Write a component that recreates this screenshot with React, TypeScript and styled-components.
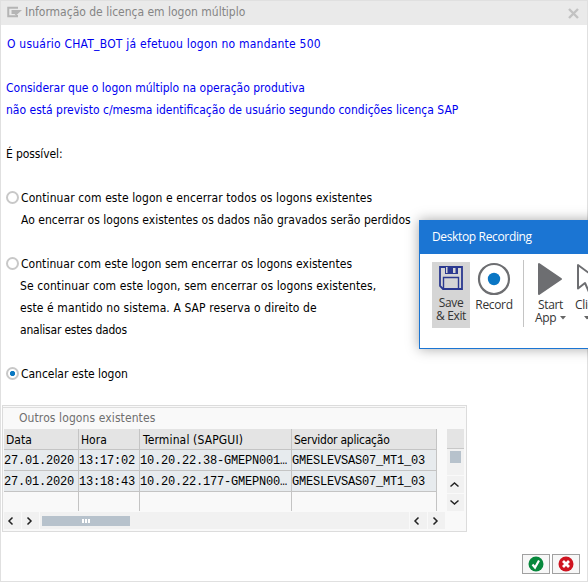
import React from 'react';
import styled, { createGlobalStyle } from 'styled-components';

const Global = createGlobalStyle`
  *, *::before, *::after { box-sizing: border-box; }
  body { margin: 0; background: #fff; overflow: hidden; }
`;

const Screen = styled.div`
  position: relative;
  width: 588px;
  height: 582px;
  overflow: hidden;
`;

const Dialog = styled.div`
  display: flex;
  flex-direction: column;
  height: 100%;
  border: 1px solid #e0e0e0;
  background: #fff;
  color: #000;
  font: 12px/22px 'DejaVu Sans Condensed', 'DejaVu Sans', sans-serif;
  white-space: nowrap;
`;

const TitleBar = styled.header`
  display: flex;
  align-items: center;
  height: 24px;
  flex: none;
  padding: 0 8px 2px 6px;
  background: #eaeaea;
  color: #858585;
`;

const Title = styled.h1`
  flex: 1;
  margin: 0 0 0 3px;
  font: inherit;
  letter-spacing: -0.01px;
`;

const CloseIcon = styled.svg`
  margin-top: 3px;
`;

const Body = styled.main`
  display: flex;
  flex-direction: column;
  padding: 8px 0 0 5px;
`;

const Line = styled.p<{ $tracking?: number; $notice?: boolean; $indent?: number; $gap?: boolean }>`
  height: 22px;
  margin: 0 0 ${p => (p.$gap ? 22 : 0)}px ${p => p.$indent ?? 0}px;
  letter-spacing: ${p => p.$tracking ?? 0}px;
  color: ${p => (p.$notice ? '#0000f0' : '#000')};
`;

const Option = styled.label<{ $tracking?: number; $gap?: boolean }>`
  display: flex;
  align-items: center;
  gap: 2px;
  height: 22px;
  margin-bottom: ${p => (p.$gap ? 22 : 0)}px;
  letter-spacing: ${p => p.$tracking ?? 0}px;
`;

const Radio = styled.span<{ $on?: boolean }>`
  width: 13px;
  height: 13px;
  margin-bottom: 1px;
  border: 2px solid #c8c8c8;
  border-radius: 50%;
  background: ${p => (p.$on ? 'radial-gradient(circle, #0a78c2 2.2px, #fff 3px)' : '#fff')};
`;

const Group = styled.section`
  width: 465px;
  height: 127px;
  flex: none;
  margin: 20px 0 0 1px;
  padding: 1px;
  border: 1px solid #dcdcdc;
  background: #f9f9f9;
`;

const GroupTitle = styled.h2`
  height: 22px;
  margin: 0 0 0 -1px;
  padding: 0 0 0 16px;
  border-top: 1px solid #dedede;
  font: inherit;
  line-height: 20px;
  letter-spacing: 0.1px;
  color: #6f6f6f;
`;

const GridArea = styled.div`
  display: flex;
  height: 82px;
  gap: 10px;
`;

const Table = styled.div`
  display: grid;
  grid-template-columns: 75px 61px 152px 145px;
  grid-template-rows: 21px 21px 21px 19px;
`;

const Cell = styled.div<{ $kind?: 'head' | 'blank'; $tracking?: number }>`
  overflow: hidden;
  border-right: 1px solid #c4c4c4;
  border-bottom: ${p => (p.$kind === 'blank' ? 0 : 1)}px solid #c4c4c4;
  background: ${p => (p.$kind === 'head' ? '#e4e4e4' : p.$kind === 'blank' ? '#f9f9f9' : '#e7ebee')};
  ${p =>
    p.$kind === 'head'
      ? `padding-left: 2px; line-height: 22px; letter-spacing: ${p.$tracking ?? 0}px;`
      : `font: 12px/22px 'Courier New', 'Liberation Mono', monospace; letter-spacing: -0.2px;`}
`;

const HeadInset = styled.span<{ $by: number }>`
  padding-left: ${p => p.$by}px;
`;

const VScroll = styled.div`
  display: flex;
  flex-direction: column;
  width: 17px;
  gap: 1px;
`;

const VHead = styled.div`
  height: 20px;
  margin-bottom: -1px;
  border-bottom: 1px solid #c8c8c8;
  background: #e4e4e4;
`;

const VTrack = styled.div`
  flex: 1;
  padding: 2px 3px;
  background: #f1f1f1;
`;

const VThumb = styled.div`
  height: 12px;
  background: #b7c2cc;
`;

const HScroll = styled.div`
  display: flex;
  gap: 1px;
  height: 17px;
  width: 461px;
  margin-top: 1px;
  padding-right: 20px;
`;

const HTrack = styled.div`
  flex: 1;
  padding: 4px 2px;
  background: #f1f1f1;
`;

const HThumb = styled.div`
  display: flex;
  align-items: center;
  justify-content: center;
  gap: 1px;
  width: 88px;
  height: 10px;
  background: #b7c2cc;
`;

const Grip = styled.i`
  width: 2px;
  height: 4px;
  background: #fff;
`;

const ArrowButton = styled.button`
  display: flex;
  align-items: center;
  justify-content: center;
  flex: none;
  width: 17px;
  height: 17px;
  padding: 0 2px 0 0;
  border: 0;
  background: #f1f1f1;
`;

const Footer = styled.footer`
  display: flex;
  justify-content: flex-end;
  gap: 2px;
  margin-top: auto;
  padding: 0 7px 7px 0;
`;

const FooterButton = styled.button`
  display: grid;
  place-items: center;
  width: 28px;
  height: 20px;
  padding: 0;
  border: 1px solid #a0a0a0;
  background: #f7f7f7;
`;

const Recorder = styled.aside`
  position: absolute;
  left: 419px;
  top: 220px;
  width: 260px;
  height: 129px;
  border: 1px solid #1b75d3;
  background: #fff;
  box-shadow: 0 0 12px rgba(0, 0, 0, 0.35);
  color: #333;
  font: 12px/13px 'Open Sans', sans-serif;
  white-space: nowrap;
`;

const RecorderTitle = styled.div`
  height: 33px;
  padding-left: 12px;
  background: #1b75d3;
  color: #fff;
  line-height: 32px;
  letter-spacing: -0.35px;
`;

const Tools = styled.div`
  display: flex;
  align-items: flex-start;
  padding: 8px 0 0 12px;
`;

const Tool = styled.div<{ $width: number; $active?: boolean; $start?: boolean }>`
  display: flex;
  flex-direction: column;
  align-items: ${p => (p.$start ? 'flex-start' : 'center')};
  flex: none;
  width: ${p => p.$width}px;
  height: 66px;
  background: ${p => (p.$active ? '#d5d5d5' : 'transparent')};
  letter-spacing: -0.35px;
`;

const Label = styled.span<{ $top?: number; $inset?: number }>`
  display: flex;
  align-items: center;
  gap: 4px;
  height: 13px;
  margin-top: ${p => p.$top ?? 0}px;
  padding-left: ${p => p.$inset ?? 0}px;
`;

const Separator = styled.div`
  width: 1px;
  height: 67px;
  margin: -2px 11px 0 5px;
  background: #c4c4c4;
`;

const Caret = () => (
  <svg width="6" height="4"><path d="M0 0h6L3 3.5z" fill="#666" /></svg>
);

const paths = {
  left: 'M6.5 1.5 3 5l3.5 3.500',
  right: 'M3.5 1.5 7 5 3.5 8.500',
  up: 'M1.500 6.500 5.500 3l4 3.500',
  down: 'M1.500 2.500 5.500 6l4-3.500',
};

const Arrow = ({ to }: { to: keyof typeof paths }) => (
  <ArrowButton aria-label={to}>
    <svg width="11" height="10"><path d={paths[to]} fill="none" stroke="#222" strokeWidth="1.5" /></svg>
  </ArrowButton>
);

const rows = [
  ['27.01.2020', '13:17:02', '10.20.22.38-GMEPN001…', 'GMESLEVSAS07_MT1_03'],
  ['27.01.2020', '13:18:43', '10.20.22.177-GMEPN00…', 'GMESLEVSAS07_MT1_03'],
];

export default function App() {
  return (
    <Screen>
      <Global />
      <Dialog>
        <TitleBar>
          <svg width="15" height="12">
            <path d="M11 1.750H1.250v8.500H10V9" fill="none" stroke="#b5b5b5" strokeWidth="2" />
            <path d="M4.500 4h10.500L9 9.500 7.500 8H4.500z" fill="#b5b5b5" />
          </svg>
          <Title>Informação de licença em logon múltiplo</Title>
          <CloseIcon width="11" height="11"><path d="M1 1l9 9M10 1l-9 9" stroke="#c2c2c2" strokeWidth="2.400" /></CloseIcon>
        </TitleBar>
        <Body>
          <Line $notice $gap $indent={1} $tracking={0.22}>O usuário CHAT_BOT já efetuou logon no mandante 500</Line>
          <Line $notice>Considerar que o logon múltiplo na operação produtiva</Line>
          <Line $notice $gap>não está previsto c/mesma identificação de usuário segundo condições licença SAP</Line>
          <Line $gap $tracking={-0.1}>É possível:</Line>
          <Option $tracking={0.09}><Radio />Continuar com este logon e encerrar todos os logons existentes</Option>
          <Line $gap $indent={15} $tracking={0.015}>Ao encerrar os logons existentes os dados não gravados serão perdidos</Line>
          <Option $tracking={0.045}><Radio />Continuar com este logon sem encerrar os logons existentes</Option>
          <Line $indent={14} $tracking={0.09}>Se continuar com este logon, sem encerrar os logons existentes,</Line>
          <Line $indent={14} $tracking={0.1}>este é mantido no sistema. A SAP reserva o direito de</Line>
          <Line $gap $indent={14} $tracking={-0.2}>analisar estes dados</Line>
          <Option $tracking={-0.04}><Radio $on />Cancelar este logon</Option>
        </Body>
        <Group>
          <GroupTitle>Outros logons existentes</GroupTitle>
          <GridArea>
            <Table>
              <Cell $kind="head">Data</Cell>
              <Cell $kind="head">Hora</Cell>
              <Cell $kind="head" $tracking={0.14}><HeadInset $by={1}>Terminal (SAPGUI)</HeadInset></Cell>
              <Cell $kind="head" $tracking={-0.24}>Servidor aplicação</Cell>
              {rows.map(row => row.map((text, i) => <Cell key={row[1] + i}>{text}</Cell>))}
              {rows[0].map((_, i) => <Cell key={i} $kind="blank" />)}
            </Table>
            <VScroll>
              <VHead />
              <VTrack><VThumb /></VTrack>
              <Arrow to="up" />
              <Arrow to="down" />
            </VScroll>
          </GridArea>
          <HScroll>
            <Arrow to="left" />
            <Arrow to="right" />
            <HTrack><HThumb><Grip /><Grip /><Grip /></HThumb></HTrack>
            <Arrow to="left" />
            <Arrow to="right" />
          </HScroll>
        </Group>
        <Footer>
          <FooterButton aria-label="OK">
            <svg width="16" height="16"><circle cx="8" cy="8" r="7.500" fill="#07883c" /><path d="M4.500 8.500 7 11.500 11 4.500" fill="none" stroke="#fff" strokeWidth="2.200" /></svg>
          </FooterButton>
          <FooterButton aria-label="Cancelar">
            <svg width="16" height="16"><circle cx="8" cy="8" r="7.500" fill="#cf1420" /><path d="M5 5l6 6M11 5l-6 6" stroke="#fff" strokeWidth="2.800" /></svg>
          </FooterButton>
        </Footer>
      </Dialog>
      <Recorder>
        <RecorderTitle>Desktop Recording</RecorderTitle>
        <Tools>
          <Tool $width={38} $active>
            <svg width="26" height="30">
              <path d="M2 5h22v22H5L2 24z" fill="none" stroke="#2b3990" strokeWidth="1.800" />
              <path d="M7 5h13v7H7z" fill="#2b3990" /><path d="M8 5h1.500v6H8zM15 6h2.500v5H15z" fill="#d5d5d5" />
              <path d="M5.500 27V15.500h15V27" fill="none" stroke="#2b3990" strokeWidth="1.400" />
            </svg>
            <Label $top={4}>Save</Label>
            <Label>&amp; Exit</Label>
          </Tool>
          <Tool $width={48}>
            <svg width="34" height="34"><circle cx="17" cy="17" r="15" fill="none" stroke="#6d6e71" strokeWidth="2.200" /><circle cx="17" cy="17" r="6.200" fill="#0a76c4" /></svg>
            <Label $top={2}>Record</Label>
          </Tool>
          <Separator />
          <Tool $width={40} $start>
            <svg width="30" height="34"><path d="M4 2v30l22-15z" fill="#6d6e71" stroke="#6d6e71" strokeWidth="2" strokeLinejoin="round" /></svg>
            <Label $top={2} $inset={3}>Start</Label>
            <Label>App<Caret /></Label>
          </Tool>
          <Tool $width={40} $start>
            <svg width="26" height="34"><path d="M3 3v23.500l7-5.500 4 9 5-2-4-9 7-2z" fill="none" stroke="#6d6e71" strokeWidth="2" strokeLinejoin="round" /></svg>
            <Label $top={2}>Click</Label>
            <Label $inset={9}><Caret /></Label>
          </Tool>
        </Tools>
      </Recorder>
    </Screen>
  );
}
